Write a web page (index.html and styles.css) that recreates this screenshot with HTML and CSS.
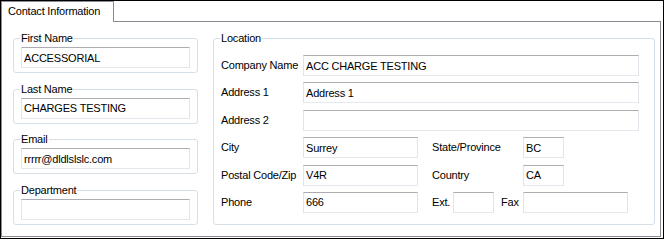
FILE: index.html
```html
<!DOCTYPE html>
<html lang="en">
<head>
  <meta charset="UTF-8">
  <title>Contact Information</title>
  <link rel="stylesheet" href="styles.css">
</head>
<body>
  <div class="window">
    <div class="tab-strip">
      <div class="tab">Contact Information</div>
    </div>
    <div class="panel">
      <div class="col-left">
        <fieldset class="group">
          <legend>First Name</legend>
          <input class="field" value="ACCESSORIAL">
        </fieldset>
        <fieldset class="group">
          <legend>Last Name</legend>
          <input class="field" value="CHARGES TESTING">
        </fieldset>
        <fieldset class="group">
          <legend>Email</legend>
          <input class="field" value="rrrrr@dldlslslc.com">
        </fieldset>
        <fieldset class="group">
          <legend>Department</legend>
          <input class="field" value="">
        </fieldset>
      </div>
      <fieldset class="group location">
        <legend>Location</legend>
        <div class="rows">
          <div class="row">
            <span class="lbl">Company Name</span>
            <input class="field wide" value="ACC CHARGE TESTING">
          </div>
          <div class="row">
            <span class="lbl">Address 1</span>
            <input class="field wide" value="Address 1">
          </div>
          <div class="row">
            <span class="lbl">Address 2</span>
            <input class="field wide" value="">
          </div>
          <div class="row">
            <span class="lbl">City</span>
            <input class="field mid" value="Surrey">
            <span class="lbl2">State/Province</span>
            <input class="field small" value="BC">
          </div>
          <div class="row">
            <span class="lbl">Postal Code/Zip</span>
            <input class="field mid" value="V4R">
            <span class="lbl2">Country</span>
            <input class="field small" value="CA">
          </div>
          <div class="row">
            <span class="lbl">Phone</span>
            <input class="field mid" value="666">
            <span class="lbl-ext">Ext.</span>
            <input class="field small" value="">
            <span class="lbl-fax">Fax</span>
            <input class="field fax" value="">
          </div>
        </div>
      </fieldset>
    </div>
  </div>
</body>
</html>
```

FILE: styles.css
```css
* { box-sizing: border-box; }
body { margin: 0; font: 11px/13px "Liberation Sans", Arial, sans-serif; color: #000; background: #fff; }

.window {
  width: 664px;
  height: 239px;
  border: 1px solid #000;
  padding: 0 2px 1px 0;
  display: flex;
  flex-direction: column;
  background: #fff;
}
.tab-strip { height: 20px; display: flex; }
.tab {
  position: relative;
  z-index: 1;
  width: 113px;
  height: 21px;
  border: 1px solid #898c95;
  border-bottom: none;
  background: #fff;
  padding: 0 6px;
  line-height: 19px;
  letter-spacing: -0.2px;
}
.panel {
  flex: 1;
  border: 1px solid #898c95;
  display: flex;
  gap: 15px;
  padding: 10px 5px 11px 11px;
}
.col-left { width: 185px; display: flex; flex-direction: column; justify-content: space-between; }

.group {
  margin: 0;
  min-width: 0;
  padding: 0 7px 4px;
  border: 1px solid #d5dfe5;
  border-radius: 3px;
}
.group legend { padding: 0 1px; margin-left: -1px; line-height: 13px; letter-spacing: -0.2px; }
.location { width: 442px; }

.field {
  display: block;
  height: 21px;
  width: 169px;
  margin: 2px 0 0;
  padding: 0 2px;
  border: 1px solid;
  border-color: #abadb3 #e2e3ea #e3e9ef #e2e3ea;
  font: inherit;
  letter-spacing: -0.2px;
  color: #000;
  background: #fff;
  outline: none;
}
.rows { display: flex; flex-direction: column; gap: 6.4px; padding-top: 10px; }
.row { display: flex; align-items: center; height: 21px; letter-spacing: -0.2px; }
.row .field { margin: 0; }
.lbl { width: 82px; }
.lbl2 { width: 91px; margin-left: 14px; }
.lbl-ext { width: 21px; margin-left: 14px; }
.lbl-fax { width: 22px; margin-left: 7px; }
.wide { width: 336px; }
.mid { width: 115px; }
.small { width: 41px; }
.fax { width: 105px; }
```
